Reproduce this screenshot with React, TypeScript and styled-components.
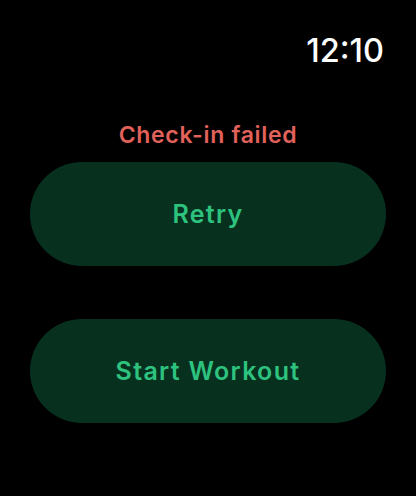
import styled, { createGlobalStyle } from 'styled-components'

const GlobalStyle = createGlobalStyle`
  html, body {
    margin: 0;
    padding: 0;
    background: #000;
  }
  body {
    font-family: Inter, "Noto Sans", "Liberation Sans", sans-serif;
  }
`

export const Screen = styled.div`
  width: 416px;
  height: 496px;
  background: #000;
  display: flex;
  flex-direction: column;
  box-sizing: border-box;
  padding: 0 30px;
`

export const StatusBar = styled.div`
  height: 122px;
  display: flex;
  justify-content: flex-end;
  align-items: flex-start;
  padding-top: 32px;
  box-sizing: border-box;
`

export const Clock = styled.span`
  color: #fff;
  font-size: 32.5px;
  font-weight: 500;
  line-height: 38px;
  margin-right: 2px;
`

export const Status = styled.div`
  color: #e0625a;
  font-size: 23px;
  font-weight: 600;
  text-align: center;
  line-height: 26px;
  height: 40px;
  letter-spacing: 0.7px;
`

export const Actions = styled.div`
  display: flex;
  flex-direction: column;
  gap: 53px;
`

export const Pill = styled.button`
  width: 356px;
  height: 104px;
  border: none;
  border-radius: 52px;
  background: #07301f;
  color: #2ec27f;
  font-family: inherit;
  font-size: 25px;
  font-weight: 600;
  letter-spacing: 1.3px;
  cursor: pointer;
`

export default function App() {
  return (
    <>
      <GlobalStyle />
      <Screen>
        <StatusBar>
          <Clock>12:10</Clock>
        </StatusBar>
        <Status>Check-in failed</Status>
        <Actions>
          <Pill>Retry</Pill>
          <Pill>Start Workout</Pill>
        </Actions>
      </Screen>
    </>
  )
}
